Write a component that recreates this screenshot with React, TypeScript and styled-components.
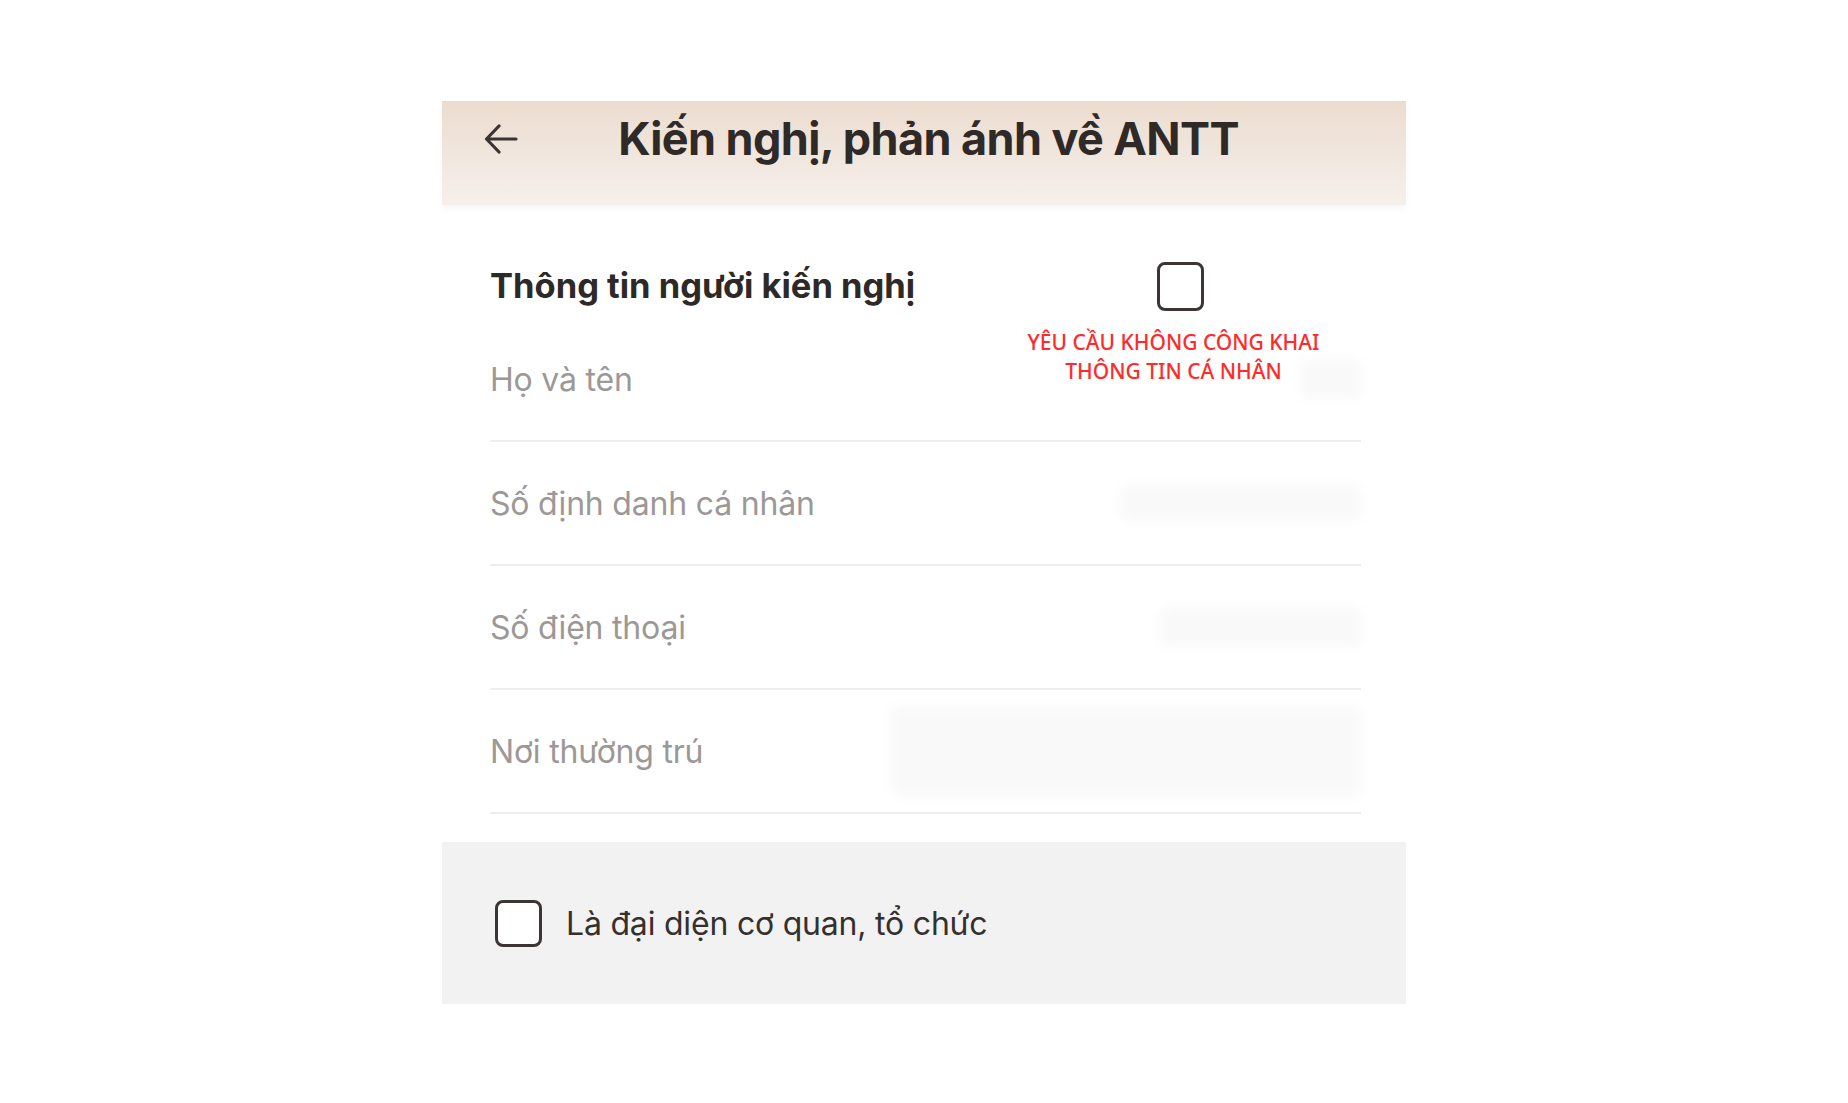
import React from "react";
import styled, { createGlobalStyle } from "styled-components";

const GlobalStyle = createGlobalStyle`
  html, body { margin: 0; padding: 0; background: #ffffff; }
  body { font-family: Inter, "Noto Sans", "Liberation Sans", sans-serif; }
`;

const Page = styled.div`
  width: 1848px;
  height: 1103px;
  display: flex;
  justify-content: center;
  padding-top: 101px;
  box-sizing: border-box;
  padding-left: 0px;
`;

const Card = styled.div`
  width: 964px;
  display: flex;
  flex-direction: column;
`;

const Header = styled.header`
  height: 104px;
  display: grid;
  grid-template-columns: 1fr auto 1fr;
  align-items: center;
  padding: 0 44px 0 41px;
  background: linear-gradient(180deg, #ecdccf 0%, #f0e5dc 45%, #f6f0eb 100%);
  box-shadow: 0 4px 6px rgba(120, 100, 90, 0.05);
  position: relative;
  z-index: 1;
`;

const BackButton = styled.button`
  justify-self: start;
  background: none;
  border: 0;
  padding: 0;
  margin-top: -28px;
  display: flex;
  color: #3a3533;
`;

const Title = styled.h1`
  margin: -30px 0 0 12px;
  font-family: Inter, "Liberation Sans", sans-serif;
  font-weight: 700;
  font-size: 45px;
  letter-spacing: -0.6px;
  color: #2f2a28;
  white-space: nowrap;
`;

const Body = styled.section`
  padding: 0 45px 28px 48px;
  background: #fff;
`;

const SectionHead = styled.div`
  height: 113px;
  display: flex;
  align-items: center;
  justify-content: space-between;
  box-sizing: border-box;
`;

const SectionTitle = styled.h2`
  margin: 48px 0 0 0;
  font-family: Inter, "Liberation Sans", sans-serif;
  font-weight: 700;
  font-size: 34.5px;
  letter-spacing: 0;
  color: #2d2927;
`;

const PrivacyBox = styled.div`
  position: relative;
  margin-right: 157px;
  margin-top: 50px;
`;

const Check = styled.span<{ $h?: number }>`
  display: block;
  width: 47px;
  height: ${(p) => p.$h ?? 47}px;
  box-sizing: border-box;
  border: 3px solid #3b3634;
  border-radius: 8px;
  background: #fff;
  flex-shrink: 0;
`;

const Caption = styled.div`
  position: absolute;
  top: 66px;
  left: 50%;
  transform: translateX(-50%);
  margin-left: -7px;
  white-space: nowrap;
  text-align: center;
  font-family: "Noto Sans", "Open Sans", sans-serif;
  font-weight: 500;
  font-size: 21px;
  line-height: 29px;
  color: #ff2b2b;
  text-transform: uppercase;
`;

const Blur = styled.div<{ $w: number; $h: number }>`
  position: absolute;
  right: 0;
  top: 50%;
  width: ${(p) => p.$w}px;
  height: ${(p) => p.$h}px;
  transform: translateY(-50%);
  background: rgba(0, 0, 0, 0.025);
  filter: blur(6px);
  border-radius: 8px;
`;

const Row = styled.div`
  position: relative;
  height: 122px;
  display: flex;
  align-items: center;
  border-bottom: 2px solid #eeeeee;
`;

const Label = styled.span`
  font-family: Inter, "Liberation Sans", sans-serif;
  font-size: 32px;
  color: #9c9896;
  letter-spacing: -0.2px;
`;

const Footer = styled.label`
  height: 162px;
  background: #f2f2f2;
  display: flex;
  align-items: center;
  gap: 24px;
  padding-left: 53px;
`;

const FooterText = styled.span`
  font-family: Inter, "Liberation Sans", sans-serif;
  font-size: 32px;
  color: #35302e;
  letter-spacing: -0.2px;
`;

const ArrowIcon = () => (
  <svg width="36" height="34" viewBox="0 0 36 34" fill="none">
    <path
      d="M33 17H4M16 4L3.5 17L16 30"
      stroke="currentColor"
      strokeWidth="3.2"
      strokeLinecap="round"
      strokeLinejoin="round"
    />
  </svg>
);

const fields: { label: string; blur: [number, number] }[] = [
  { label: "Họ và tên", blur: [60, 40] },
  { label: "Số định danh cá nhân", blur: [240, 36] },
  { label: "Số điện thoại", blur: [200, 40] },
  { label: "Nơi thường trú", blur: [470, 90] },
];

export default function App() {
  return (
    <>
      <GlobalStyle />
      <Page>
        <Card>
          <Header>
            <BackButton aria-label="Quay lại">
              <ArrowIcon />
            </BackButton>
            <Title>Kiến nghị, phản ánh về ANTT</Title>
            <span />
          </Header>
          <Body>
            <SectionHead>
              <SectionTitle>Thông tin người kiến nghị</SectionTitle>
              <PrivacyBox>
                <Check $h={49} />
                <Caption>
                  Yêu cầu không công khai
                  <br />
                  thông tin cá nhân
                </Caption>
              </PrivacyBox>
            </SectionHead>
            {fields.map((f) => (
              <Row key={f.label}>
                <Label>{f.label}</Label>
                <Blur $w={f.blur[0]} $h={f.blur[1]} />
              </Row>
            ))}
          </Body>
          <Footer>
            <Check />
            <FooterText>Là đại diện cơ quan, tổ chức</FooterText>
          </Footer>
        </Card>
      </Page>
    </>
  );
}
